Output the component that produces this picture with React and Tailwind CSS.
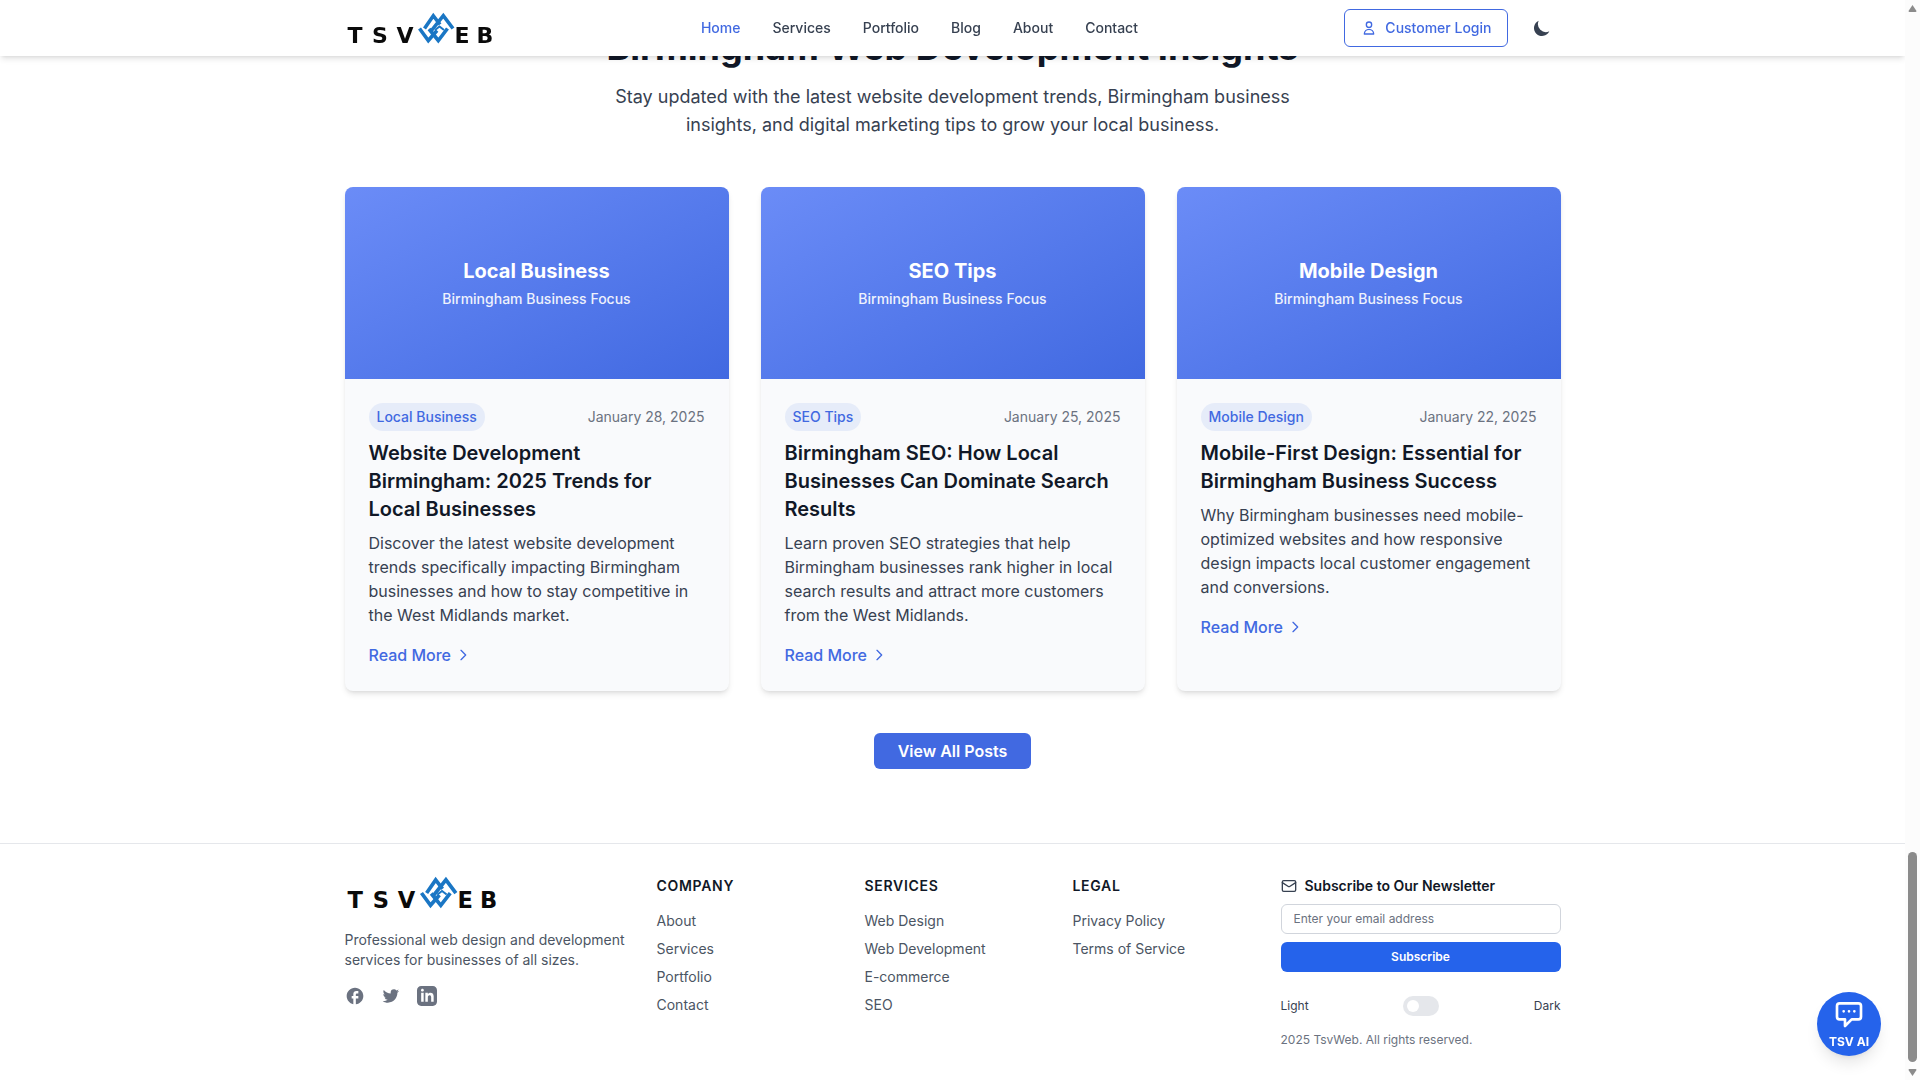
import React, { useState } from 'react';
import { Mail } from 'lucide-react';
import { MdFacebook } from 'react-icons/md';
import { BiLogoTwitter } from 'react-icons/bi';

const navItems = ['Home', 'Services', 'Portfolio', 'Blog', 'About', 'Contact'];

const posts = [
  {
    category: 'Local Business',
    date: 'January 28, 2025',
    title: 'Website Development Birmingham: 2025 Trends for Local Businesses',
    excerpt:
      'Discover the latest website development trends specifically impacting Birmingham businesses and how to stay competitive in the West Midlands market.',
  },
  {
    category: 'SEO Tips',
    date: 'January 25, 2025',
    title: 'Birmingham SEO: How Local Businesses Can Dominate Search Results',
    excerpt:
      'Learn proven SEO strategies that help Birmingham businesses rank higher in local search results and attract more customers from the West Midlands.',
  },
  {
    category: 'Mobile Design',
    date: 'January 22, 2025',
    title: 'Mobile-First Design: Essential for Birmingham Business Success',
    excerpt:
      'Why Birmingham businesses need mobile-optimized websites and how responsive design impacts local customer engagement and conversions.',
  },
];

const footerColumns = [
  { heading: 'Company', links: ['About', 'Services', 'Portfolio', 'Contact'] },
  { heading: 'Services', links: ['Web Design', 'Web Development', 'E-commerce', 'SEO'] },
  { heading: 'Legal', links: ['Privacy Policy', 'Terms of Service'] },
];

const Logo = ({ className }) => (
  <svg viewBox="0 0 150 32" className={className} role="img" aria-label="TSVWEB">
    <g fill="#0a0a0a" fontFamily="'DejaVu Sans', sans-serif" fontWeight="700" fontSize="22" textAnchor="middle">
      <text x="10" y="31">T</text>
      <text x="35" y="31">S</text>
      <text x="60" y="31">V</text>
      <text x="117" y="31">E</text>
      <text x="140" y="31">B</text>
    </g>
    <g fill="none" stroke="#1a76c4" strokeWidth="3.6">
      <path d="M79.5 16.5 L88.3 3.7 L95 12.5" />
      <path d="M86.5 18.5 L98.3 3.7 L108 16.5" />
      <path d="M74.5 16.5 L83.3 28.5 L92 18.5" />
      <path d="M84 17 L93.3 28.5 L102.5 16.5" />
      <path d="M90 18 L94.5 14.5 L99 18" strokeWidth="2" />
    </g>
  </svg>
);

const PostCard = ({ post }) => (
  <article className="flex flex-col overflow-hidden rounded-lg bg-[#f9fafc] shadow-md">
    <div className="flex h-48 flex-col items-center justify-center bg-linear-to-br from-[#6b8cf7] to-[#4169e1] pt-1 text-white">
      <span className="text-xl font-bold">{post.category}</span>
      <span className="text-sm leading-7 font-medium opacity-90">Birmingham Business Focus</span>
    </div>
    <div className="p-6">
      <div className="mb-2 flex items-center justify-between text-sm">
        <span className="rounded-full bg-[#e6ecf9] px-2 py-1 font-medium text-[#4169e1]">{post.category}</span>
        <time className="text-[#6b7280]">{post.date}</time>
      </div>
      <h3 className="mb-2 text-xl font-semibold text-[#111827]">{post.title}</h3>
      <p className="mb-4 text-base text-[#374151]">{post.excerpt}</p>
      <a href="#" className="inline-flex items-center gap-1 font-medium text-[#4169e1]">
        Read More
        <svg className="h-4 w-4" viewBox="0 0 24 24" fill="none" stroke="currentColor" strokeWidth="2" strokeLinecap="round" strokeLinejoin="round">
          <path d="M9 5l7 7-7 7" />
        </svg>
      </a>
    </div>
  </article>
);

const Header = () => (
  <header className="fixed top-0 right-[15px] left-0 z-40 bg-white shadow-md">
    <div className="mx-auto flex h-14 max-w-7xl items-center justify-between px-8">
      <a href="#">
        <Logo className="h-8 w-[150px] overflow-visible" />
      </a>
      <nav className="flex items-center gap-8 text-sm font-medium text-[#374151]">
        {navItems.map((item) => (
          <a key={item} href="#" className={item === 'Home' ? 'text-[#4169e1]' : ''}>
            {item}
          </a>
        ))}
      </nav>
      <div className="flex items-center gap-4">
        <a
          href="#"
          className="flex items-center gap-2 rounded-md border border-[#4169e1] px-4 py-2 text-sm font-medium text-[#4169e1]"
        >
          <svg className="h-4 w-4" viewBox="0 0 24 24" fill="none" stroke="currentColor" strokeWidth="2" strokeLinecap="round" strokeLinejoin="round">
            <path d="M16 7a4 4 0 11-8 0 4 4 0 018 0zM12 14a7 7 0 00-7 7h14a7 7 0 00-7-7z" />
          </svg>
          Customer Login
        </a>
        <button type="button" aria-label="Toggle dark mode" className="p-2 text-[#374151]">
          <svg className="h-5 w-5" viewBox="0 0 20 20" fill="currentColor">
            <path d="M17.293 13.293A8 8 0 016.707 2.707a8.001 8.001 0 1010.586 10.586z" />
          </svg>
        </button>
      </div>
    </div>
  </header>
);

const Footer = () => {
  const [dark, setDark] = useState(false);
  const [email, setEmail] = useState('');

  return (
    <footer className="border-t border-gray-200">
      <div className="mx-auto grid max-w-7xl grid-cols-12 gap-8 px-8 py-8">
        <div className="col-span-3">
          <Logo className="h-[33px] w-[154px] overflow-visible" />
          <p className="mt-[21px] text-sm text-[#4b5563]">
            Professional web design and development services for businesses of all sizes.
          </p>
          <div className="mt-4 flex gap-4 text-[#6b7280]">
            <a href="#" aria-label="Facebook">
              <MdFacebook className="h-5 w-5" />
            </a>
            <a href="#" aria-label="Twitter">
              <BiLogoTwitter className="h-5 w-5" />
            </a>
            <a href="#" aria-label="LinkedIn">
              <svg className="h-5 w-5" viewBox="0 0 24 24" fill="currentColor">
                <path d="M19 0h-14c-2.761 0-5 2.239-5 5v14c0 2.761 2.239 5 5 5h14c2.762 0 5-2.239 5-5v-14c0-2.761-2.238-5-5-5zm-11 19h-3v-11h3v11zm-1.5-12.268c-.966 0-1.75-.79-1.75-1.764s.784-1.764 1.75-1.764 1.75.79 1.75 1.764-.783 1.764-1.75 1.764zm13.5 12.268h-3v-5.604c0-3.368-4-3.113-4 0v5.604h-3v-11h3v1.765c1.396-2.586 7-2.777 7 2.476v6.759z" />
              </svg>
            </a>
          </div>
        </div>

        {footerColumns.map((column) => (
          <div key={column.heading} className="col-span-2">
            <h3 className="text-sm font-semibold tracking-wider text-[#111827] uppercase">{column.heading}</h3>
            <ul className="mt-[15px] space-y-2 text-sm text-[#4b5563]">
              {column.links.map((link) => (
                <li key={link}>
                  <a href="#">{link}</a>
                </li>
              ))}
            </ul>
          </div>
        ))}

        <div className="col-span-3">
          <form onSubmit={(e) => e.preventDefault()}>
            <label htmlFor="newsletter-email" className="flex items-center gap-2 text-sm font-semibold text-[#111827]">
              <Mail className="h-4 w-4 text-[#374151]" />
              Subscribe to Our Newsletter
            </label>
            <input
              id="newsletter-email"
              type="email"
              value={email}
              onChange={(e) => setEmail(e.target.value)}
              placeholder="Enter your email address"
              className="mt-2 block w-full rounded-md border border-gray-300 px-3 py-1.5 text-xs text-[#111827] placeholder:text-[#6b7280]"
            />
            <button type="submit" className="mt-2 block h-[30px] w-full rounded-md bg-[#2563eb] text-xs font-semibold text-white">
              Subscribe
            </button>
          </form>
          <div className="mt-6 flex items-center justify-between text-xs text-[#374151]">
            <label htmlFor="theme-switch">Light</label>
            <input
              id="theme-switch"
              type="checkbox"
              role="switch"
              checked={dark}
              onChange={() => setDark(!dark)}
              className="flex h-5 w-9 appearance-none items-center rounded-full bg-gray-200 px-1 before:h-3 before:w-3 before:rounded-full before:bg-white checked:justify-end checked:bg-[#2563eb]"
            />
            <label htmlFor="theme-switch">Dark</label>
          </div>
          <p className="mt-4 text-xs text-[#6b7280]">2025 TsvWeb. All rights reserved.</p>
        </div>
      </div>
    </footer>
  );
};

const ScrollRail = () => (
  <div className="fixed inset-y-0 right-0 z-50 flex w-[15px] flex-col items-center justify-between bg-[#fcfcfc] py-1" aria-hidden="true">
    <svg className="h-2 w-[9px] text-[#8b8b8b]" viewBox="0 0 9 8" fill="currentColor">
      <path d="M4.5 1 L8.5 7 Q8.5 8 7.5 8 H1.5 Q0.5 8 0.5 7 Z" />
    </svg>
    <div className="flex flex-col items-center gap-[7px]">
      <div className="h-[210px] w-[9px] rounded-full bg-[#8b8b8b]" />
      <svg className="h-[7px] w-[9px] text-[#8b8b8b]" viewBox="0 0 9 7" fill="currentColor">
        <path d="M4.5 7 L0.5 1 Q0.5 0 1.5 0 H7.5 Q8.5 0 8.5 1 Z" />
      </svg>
    </div>
  </div>
);

const App = () => {
  return (
    <div className="min-h-screen bg-white pr-[15px] font-[Inter,sans-serif] text-[#111827]">
      <Header />

      <main className="mx-auto max-w-7xl px-8 pt-[27px] pb-[74px]">
        <div className="mb-12 text-center">
          <h2 className="mb-4 text-4xl font-bold">Birmingham Web Development Insights</h2>
          <p className="mx-auto max-w-[700px] text-lg text-[#374151]">
            Stay updated with the latest website development trends, Birmingham business insights, and digital
            marketing tips to grow your local business.
          </p>
        </div>
        <div className="grid grid-cols-3 gap-8">
          {posts.map((post) => (
            <PostCard key={post.title} post={post} />
          ))}
        </div>
        <div className="mt-[42px] flex justify-center">
          <a href="#" className="rounded-md bg-[#4169e1] px-6 py-1.5 font-semibold text-white">
            View All Posts
          </a>
        </div>
      </main>

      <Footer />

      <button
        type="button"
        className="fixed right-[39px] bottom-6 z-40 flex h-16 w-16 flex-col items-center justify-center gap-1 rounded-full bg-[#2563eb] text-white shadow-lg"
      >
        <svg className="h-8 w-8" viewBox="0 0 24 24" fill="none" stroke="currentColor" strokeWidth="2" strokeLinecap="round" strokeLinejoin="round">
          <path d="M8 10h.01M12 10h.01M16 10h.01M9 16H5a2 2 0 01-2-2V6a2 2 0 012-2h14a2 2 0 012 2v8a2 2 0 01-2 2h-5l-5 5v-5z" />
        </svg>
        <span className="text-xs font-bold">TSV AI</span>
      </button>

      <ScrollRail />
    </div>
  );
};

export default App;
